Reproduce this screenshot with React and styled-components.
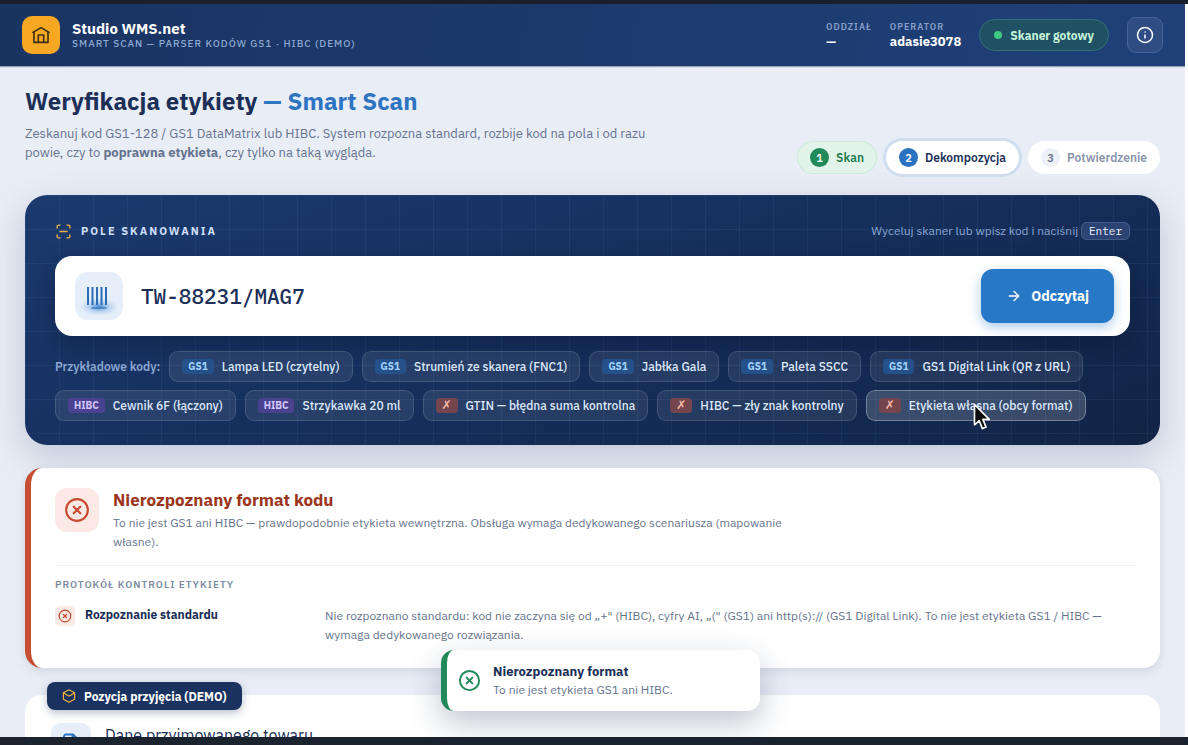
import React, { useState } from 'react';
import styled, { createGlobalStyle, css } from 'styled-components';
import { ArrowRight, CircleX, Info, ScanLine } from 'lucide-react';

const examples = [
  { tag: 'GS1', kind: 'gs1', label: 'Lampa LED (czytelny)' },
  { tag: 'GS1', kind: 'gs1', label: 'Strumień ze skanera (FNC1)' },
  { tag: 'GS1', kind: 'gs1', label: 'Jabłka Gala' },
  { tag: 'GS1', kind: 'gs1', label: 'Paleta SSCC' },
  { tag: 'GS1', kind: 'gs1', label: 'GS1 Digital Link (QR z URL)' },
  { tag: 'HIBC', kind: 'hibc', label: 'Cewnik 6F (łączony)' },
  { tag: 'HIBC', kind: 'hibc', label: 'Strzykawka 20 ml' },
  { tag: '✗', kind: 'bad', label: 'GTIN — błędna suma kontrolna' },
  { tag: '✗', kind: 'bad', label: 'HIBC — zły znak kontrolny' },
  { tag: '✗', kind: 'bad', label: 'Etykieta własna (obcy format)', active: true },
];

const HomeIcon = () => (
  <svg width="18" height="18" viewBox="0 0 18 18" fill="none" stroke="#3a2c12" strokeWidth="1.6" strokeLinejoin="round" strokeLinecap="round">
    <path d="M1 6.400 9 1.600l8 4.800" />
    <path d="M2 6V16.400h14V6" />
    <path d="M6.300 16.200V9h5.400v7.200" />
  </svg>
);

const BarcodeIcon = () => (
  <svg width="48" height="48" viewBox="0 0 48 48">
    <defs>
      <radialGradient id="glow">
        <stop offset="0" stopColor="#2a78c8" stopOpacity="0.85" />
        <stop offset="0.5" stopColor="#5a9ee0" stopOpacity="0.35" />
        <stop offset="1" stopColor="#8fc0ee" stopOpacity="0" />
      </radialGradient>
    </defs>
    <ellipse cx="24" cy="35" rx="20" ry="9" fill="url(#glow)" />
    <path d="M13 15v18M17.500 15v18M22 15v18M26.500 15v18M31 15v18" stroke="#2b6cb4" strokeWidth="2" />
    <path d="M17 36h14" stroke="#2b6cb4" strokeWidth="1.4" strokeLinecap="round" opacity="0.7" />
  </svg>
);

const BoxIcon = () => (
  <svg width="14" height="14" viewBox="0 0 14 14" fill="none" stroke="#f0b03a" strokeWidth="1.2" strokeLinejoin="round" strokeLinecap="round">
    <path d="M7 .8 12.6 3.8v6.4L7 13.2 1.4 10.200V3.800z" />
    <path d="M1.600 4 7 7.200 12.400 4" />
  </svg>
);

const DocIcon = () => (
  <svg width="18" height="20" viewBox="0 0 18 20" fill="none" stroke="#2b72c4" strokeWidth="2" strokeLinejoin="round">
    <path d="M4 1.500h7l4 4V16a2 2 0 0 1-2 2H4a2 2 0 0 1-2-2V3.500a2 2 0 0 1 2-2zM10.500 1.500V6H15" />
  </svg>
);

const Pointer = () => (
  <PointerSvg width="18" height="28" viewBox="0 0 18 28">
    <path d="M1.500 1.500v20.500l4.700-4.400 3.200 8 3.700-1.500-3.300-7.700h6.500z" fill="#0c0c0c" stroke="#fff" strokeWidth="1.600" strokeLinejoin="round" />
  </PointerSvg>
);

const App = () => {
  const [code, setCode] = useState('TW-88231/MAG7');

  return (
    <Screen>
      <GlobalStyle />
      <Page>
        <Header>
          <Brand>
            <Logo><HomeIcon /></Logo>
            <div>
              <BrandName>Studio WMS.net</BrandName>
              <BrandSub>Smart Scan — parser kodów GS1 · HIBC (demo)</BrandSub>
            </div>
          </Brand>
          <HeaderRight>
            <Meta><dt>Oddział</dt><dd>—</dd></Meta>
            <Meta><dt>Operator</dt><dd>adasie3078</dd></Meta>
            <Status><i />Skaner gotowy</Status>
            <InfoButton aria-label="Informacje"><Info size={18} /></InfoButton>
          </HeaderRight>
        </Header>

        <Main>
          <Intro>
            <div>
              <Title>Weryfikacja etykiety <span>— Smart Scan</span></Title>
              <Lead>
                Zeskanuj kod GS1-128 / GS1 DataMatrix lub HIBC. System rozpozna standard, rozbije kod na pola i od razu
                powie, czy to <b>poprawna etykieta</b>, czy tylko na taką wygląda.
              </Lead>
            </div>
            <Steps>
              <Step $state="done"><span>1</span>Skan</Step>
              <Step $state="current"><span>2</span>Dekompozycja</Step>
              <Step><span>3</span>Potwierdzenie</Step>
            </Steps>
          </Intro>

          <ScanPanel>
            <PanelHead>
              <PanelTitle htmlFor="code"><ScanLine size={17} color="#e8b04a" />Pole skanowania</PanelTitle>
              <Hint>Wyceluj skaner lub wpisz kod i naciśnij <kbd>Enter</kbd></Hint>
            </PanelHead>
            <ScanBox onSubmit={(e) => e.preventDefault()}>
              <BarcodeTile><BarcodeIcon /></BarcodeTile>
              <CodeInput id="code" value={code} spellCheck={false} onChange={(e) => setCode(e.target.value)} />
              <ReadButton type="submit"><ArrowRight size={16} />Odczytaj</ReadButton>
            </ScanBox>
            <Chips>
              <ChipsLabel>Przykładowe kody:</ChipsLabel>
              {examples.map((e) => (
                <Chip key={e.label} $active={e.active}>
                  <Tag $kind={e.kind}>{e.tag}</Tag>
                  {e.label}
                  {e.active && <Pointer />}
                </Chip>
              ))}
            </Chips>
          </ScanPanel>

          <Result>
            <ResultHead>
              <ResultIcon><CircleX size={26} /></ResultIcon>
              <div>
                <ResultTitle>Nierozpoznany format kodu</ResultTitle>
                <ResultText>
                  To nie jest GS1 ani HIBC — prawdopodobnie etykieta wewnętrzna. Obsługa wymaga dedykowanego scenariusza (mapowanie własne).
                </ResultText>
              </div>
            </ResultHead>
            <ProtocolTitle>Protokół kontroli etykiety</ProtocolTitle>
            <Check>
              <CheckIcon><CircleX size={14} /></CheckIcon>
              <CheckName>Rozpoznanie standardu</CheckName>
              <CheckText>
                Nie rozpoznano standardu: kod nie zaczyna się od „+" (HIBC), cyfry AI, „(" (GS1) ani http(s):// (GS1 Digital Link). To nie jest etykieta GS1 / HIBC — wymaga dedykowanego rozwiązania.
              </CheckText>
            </Check>
          </Result>

          <Receipt>
            <Ribbon><BoxIcon />Pozycja przyjęcia (DEMO)</Ribbon>
            <ReceiptHead>
              <ReceiptIcon><DocIcon /></ReceiptIcon>
              <ReceiptTitle>Dane przyjmowanego towaru</ReceiptTitle>
            </ReceiptHead>
          </Receipt>
        </Main>
      </Page>

      <Toast role="status">
        <CircleX size={23} color="#22895a" />
        <div>
          <ToastTitle>Nierozpoznany format</ToastTitle>
          <ToastText>To nie jest etykieta GS1 ani HIBC.</ToastText>
        </div>
      </Toast>
    </Screen>
  );
};

export default App;

const GlobalStyle = createGlobalStyle`
  * {
    box-sizing: border-box;
  }
  body {
    margin: 0;
    font-family: 'IBM Plex Sans', Inter, sans-serif;
    color: #1b2f57;
  }
  h1, h2, h3, p, dl, dt, dd, ol {
    margin: 0;
    padding: 0;
  }
  button, input {
    font: inherit;
  }
`;

const Screen = styled.div`
  display: flex;
  flex-direction: column;
  height: 100vh;
  overflow: hidden;
  border-top: 4px solid #1a202b;
  border-bottom: 8px solid #1a232e;
  background: #fcfcfe;
`;

const Page = styled.div`
  flex: 1;
  min-height: 0;
  margin-right: 3px;
  overflow: hidden;
  background: #e9edf6;
`;

const Header = styled.header`
  display: flex;
  justify-content: space-between;
  align-items: center;
  height: 62px;
  padding: 0 22px;
  background: linear-gradient(100deg, #1a3462, #1f4079);
  box-shadow: 0 1px 1px rgba(27, 47, 87, 0.4);
`;

const Brand = styled.div`
  display: flex;
  align-items: center;
  gap: 12px;
`;

const Logo = styled.div`
  display: grid;
  place-items: center;
  width: 38px;
  height: 38px;
  border-radius: 10px;
  background: #f7a823;
`;

const BrandName = styled.div`
  font-size: 15px;
  font-weight: 700;
  line-height: 16px;
  color: #fff;
`;

const BrandSub = styled.div`
  font-size: 10px;
  font-weight: 500;
  line-height: 13px;
  letter-spacing: 1px;
  text-transform: uppercase;
  color: #8fa9d3;
`;

const HeaderRight = styled.div`
  display: flex;
  align-items: center;
  gap: 18px;
`;

const Meta = styled.dl`
  dt {
    font-size: 9px;
    font-weight: 600;
    line-height: 12px;
    letter-spacing: 1px;
    text-transform: uppercase;
    color: #88a0cb;
  }
  dd {
    font-size: 13px;
    font-weight: 700;
    line-height: 17px;
    color: #fff;
  }
`;

const Status = styled.div`
  display: flex;
  align-items: center;
  gap: 8px;
  height: 32px;
  padding: 0 14px;
  border: 1px solid #35706f;
  border-radius: 16px;
  background: #1f5064;
  font-size: 12px;
  font-weight: 700;
  color: #c3f3d8;
  i {
    width: 8px;
    height: 8px;
    border-radius: 50%;
    background: #3fc882;
  }
`;

const InfoButton = styled.button`
  display: grid;
  place-items: center;
  width: 36px;
  height: 36px;
  padding: 0;
  border: 1px solid #48649a;
  border-radius: 9px;
  background: #304d83;
  color: #fff;
`;

const Main = styled.main`
  padding: 20px 25px 0;
`;

const Intro = styled.div`
  display: flex;
  justify-content: space-between;
  align-items: flex-end;
  margin-bottom: 21px;
`;

const Title = styled.h1`
  font-size: 24px;
  font-weight: 700;
  line-height: 30px;
  color: #1b2f57;
  span {
    color: #2f74c0;
  }
`;

const Lead = styled.p`
  max-width: 640px;
  margin: 8px 0 12px;
  font-size: 13px;
  line-height: 19px;
  color: #66738e;
`;

const Steps = styled.ol`
  display: flex;
  gap: 9px;
  list-style: none;
`;

const Step = styled.li`
  display: flex;
  align-items: center;
  gap: 7px;
  height: 33px;
  padding: 0 13px;
  border-radius: 17px;
  background: #fff;
  font-size: 12px;
  font-weight: 600;
  color: #8b95ab;
  span {
    display: grid;
    place-items: center;
    width: 19px;
    height: 19px;
    border-radius: 50%;
    background: #edf0f7;
    font-size: 11px;
    color: #66738e;
  }
  ${({ $state }) => $state === 'done' && css`
    background: #e2f4e9;
    box-shadow: inset 0 0 0 1px #c9ead7;
    color: #237a50;
    span {
      background: #22895a;
      color: #fff;
    }
  `}
  ${({ $state }) => $state === 'current' && css`
    box-shadow: 0 0 0 3px #d0def0;
    color: #1b2f57;
    span {
      background: #2a72c0;
      color: #fff;
    }
  `}
`;

const ScanPanel = styled.section`
  margin-bottom: 23px;
  padding: 27px 30px 24px;
  border-radius: 22px;
  background:
    linear-gradient(rgba(140, 180, 240, 0.07) 1px, transparent 1px) 0 0 / 34px 34px,
    linear-gradient(90deg, rgba(140, 180, 240, 0.07) 1px, transparent 1px) 0 0 / 34px 34px,
    linear-gradient(160deg, #1b3a6e, #16305e 45%, #112446);
  box-shadow: 0 12px 36px rgba(27, 47, 87, 0.2);
`;

const PanelHead = styled.div`
  display: flex;
  justify-content: space-between;
  align-items: center;
  height: 18px;
  margin-bottom: 16px;
`;

const PanelTitle = styled.label`
  display: flex;
  align-items: center;
  gap: 9px;
  font-size: 11px;
  font-weight: 700;
  letter-spacing: 2px;
  text-transform: uppercase;
  color: #cfdef7;
`;

const Hint = styled.div`
  font-size: 12px;
  line-height: 18px;
  color: #8ba6d2;
  kbd {
    padding: 1px 7px;
    border: 1px solid #425b88;
    border-radius: 6px;
    background: #2b4473;
    font-family: 'IBM Plex Mono', 'DejaVu Sans Mono', monospace;
    font-size: 11px;
    color: #eaf1fd;
  }
`;

const ScanBox = styled.form`
  display: flex;
  align-items: center;
  gap: 18px;
  height: 80px;
  margin-bottom: 15px;
  padding: 0 16px 0 20px;
  border-radius: 17px;
  background: #fff;
  box-shadow: 0 10px 24px rgba(8, 18, 42, 0.35);
`;

const BarcodeTile = styled.div`
  height: 48px;
  border-radius: 13px;
  background: #e6eef9;
`;

const CodeInput = styled.input`
  flex: 1;
  min-width: 0;
  padding: 0;
  border: 0;
  outline: 0;
  background: none;
  font-family: 'IBM Plex Mono', 'DejaVu Sans Mono', monospace;
  font-size: 21px;
  font-weight: 500;
  color: #1b2f57;
`;

const ReadButton = styled.button`
  display: flex;
  align-items: center;
  gap: 9px;
  height: 54px;
  padding: 0 25px;
  border: 0;
  border-radius: 12px;
  background: #2878c8;
  box-shadow: 0 4px 12px rgba(40, 120, 200, 0.4);
  font-size: 14px;
  font-weight: 700;
  color: #fff;
`;

const Chips = styled.div`
  display: flex;
  flex-wrap: wrap;
  align-items: center;
  gap: 8px 9px;
`;

const ChipsLabel = styled.span`
  font-size: 12px;
  font-weight: 600;
  color: #8ba6d2;
`;

const Chip = styled.button`
  position: relative;
  display: flex;
  align-items: center;
  gap: 8px;
  height: 31px;
  padding: 0 12px;
  border: 1px solid ${({ $active }) => ($active ? 'rgba(255, 255, 255, 0.3)' : 'rgba(255, 255, 255, 0.13)')};
  border-radius: 9px;
  background: ${({ $active }) => ($active ? 'rgba(255, 255, 255, 0.17)' : 'rgba(255, 255, 255, 0.08)')};
  font-size: 12px;
  font-weight: 500;
  color: #dce8fb;
`;

const tagColors = {
  gs1: ['#24518a', '#a3d3fb'],
  hibc: ['#4a4290', '#d3c6fb'],
  bad: ['#75454e', '#f8b9a8'],
};

const Tag = styled.span`
  padding: 0 6px;
  border-radius: 4px;
  background: ${({ $kind }) => tagColors[$kind][0]};
  font-family: ${({ $kind }) => ($kind === 'bad' ? "'DejaVu Sans', sans-serif" : 'inherit')};
  font-size: ${({ $kind }) => ($kind === 'bad' ? '12px' : '10px')};
  font-weight: 700;
  line-height: 15px;
  color: ${({ $kind }) => tagColors[$kind][1]};
`;

const PointerSvg = styled.svg`
  position: absolute;
  top: 12px;
  left: calc(50% - 3px);
`;

const Result = styled.section`
  margin-bottom: 27px;
  padding: 20px 24px 24px;
  border-left: 6px solid #c64d32;
  border-radius: 17px;
  background: #fff;
  box-shadow: 0 3px 10px rgba(27, 47, 87, 0.12);
`;

const ResultHead = styled.div`
  display: flex;
  gap: 14px;
  padding-bottom: 14px;
  border-bottom: 1px solid #eff1f5;
`;

const ResultIcon = styled.div`
  display: grid;
  place-items: center;
  flex: none;
  width: 44px;
  height: 44px;
  border-radius: 12px;
  background: #fce9e5;
  color: #c64d32;
`;

const ResultTitle = styled.h2`
  font-size: 17px;
  font-weight: 700;
  line-height: 25px;
  color: #9c3520;
`;

const ResultText = styled.p`
  max-width: 700px;
  font-size: 12px;
  line-height: 19px;
  color: #66738e;
`;

const ProtocolTitle = styled.h3`
  margin: 12px 0 15px;
  font-size: 10px;
  font-weight: 600;
  line-height: 13px;
  letter-spacing: 1px;
  text-transform: uppercase;
  color: #7f8ba3;
`;

const Check = styled.div`
  display: grid;
  grid-template-columns: 20px 230px 1fr;
  column-gap: 10px;
`;

const CheckIcon = styled.div`
  display: grid;
  place-items: center;
  height: 20px;
  border-radius: 5px;
  background: #fce9e5;
  color: #c64d32;
`;

const CheckName = styled.div`
  font-size: 12px;
  font-weight: 700;
  line-height: 17px;
`;

const CheckText = styled.p`
  font-size: 12px;
  line-height: 19px;
  color: #66738e;
`;

const Receipt = styled.section`
  position: relative;
  padding: 28px 26px;
  border-radius: 17px;
  background: #fff;
`;

const Ribbon = styled.div`
  position: absolute;
  top: -13px;
  left: 22px;
  display: flex;
  align-items: center;
  gap: 8px;
  height: 28px;
  padding: 0 15px;
  border-radius: 8px;
  background: #19325f;
  box-shadow: 0 3px 8px rgba(27, 47, 87, 0.3);
  font-size: 12px;
  font-weight: 700;
  color: #fff;
`;

const ReceiptHead = styled.div`
  display: flex;
  gap: 14px;
`;

const ReceiptIcon = styled.div`
  display: grid;
  place-items: center;
  width: 40px;
  height: 40px;
  border-radius: 10px;
  background: #e6eef9;
`;

const ReceiptTitle = styled.h2`
  font-size: 16px;
  font-weight: 400;
  line-height: 25px;
`;

const Toast = styled.div`
  position: absolute;
  bottom: 34px;
  left: calc(50% - 153px);
  display: flex;
  align-items: center;
  gap: 12px;
  width: 319px;
  height: 61px;
  padding: 0 11px;
  border-left: 6px solid #22895a;
  border-radius: 13px;
  background: #fff;
  box-shadow: 0 12px 32px rgba(27, 47, 87, 0.28);
`;

const ToastTitle = styled.div`
  font-size: 13px;
  font-weight: 700;
  line-height: 19px;
`;

const ToastText = styled.div`
  font-size: 12px;
  line-height: 18px;
  color: #66738e;
`;
